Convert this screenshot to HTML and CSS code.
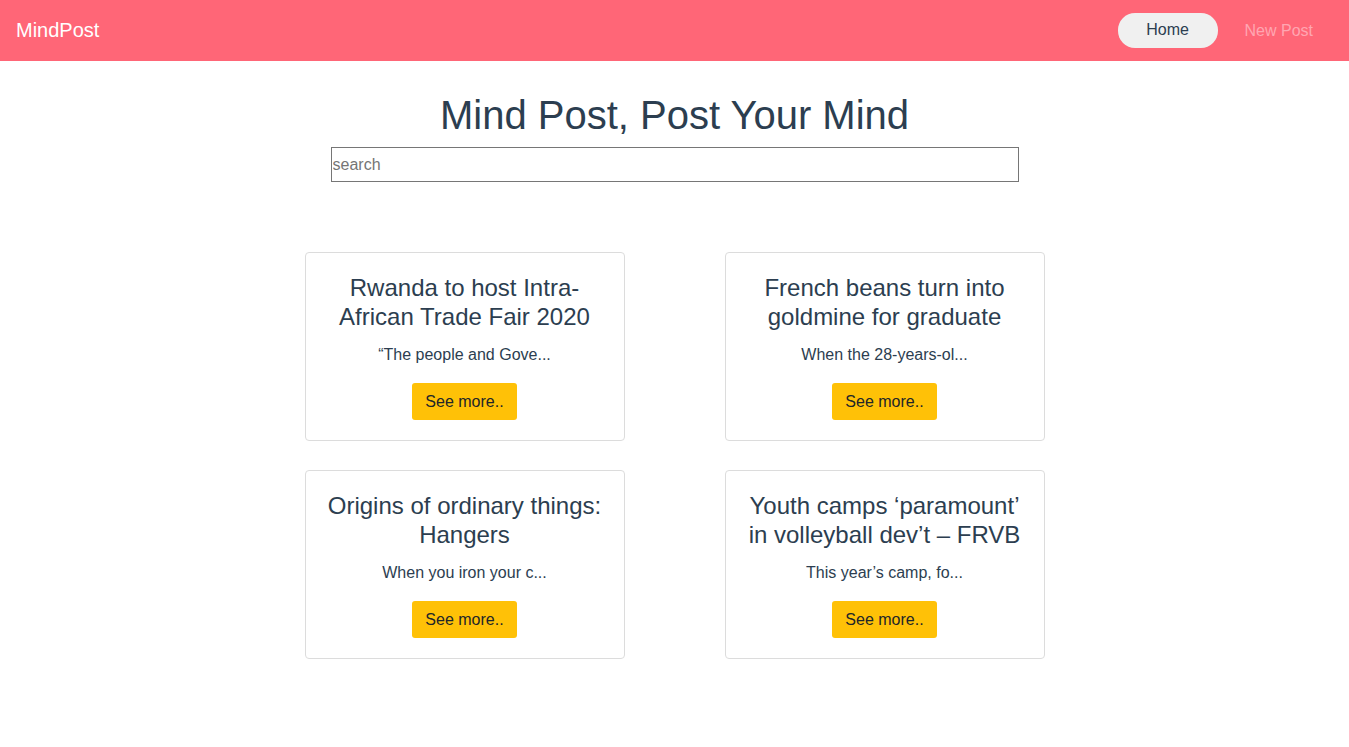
FILE: index.html
```html
<!DOCTYPE html>
<html>
<head>
<meta charset="utf-8">
<link rel="stylesheet" href="styles.css">
</head>
<body>
<nav class="navbar">
  <div class="brand">MindPost</div>
  <div class="nav-links">
    <a class="nav-link active" href="#">Home</a>
    <a class="nav-link" href="#">New Post</a>
  </div>
</nav>
<main class="main">
  <h1 class="title">Mind Post, Post Your Mind</h1>
  <input class="search" type="text" placeholder="search">
  <div class="grid">
    <div class="card">
      <h3 class="card-title">Rwanda to host Intra-African Trade Fair 2020</h3>
      <p class="card-text">“The people and Gove...</p>
      <button class="btn">See more..</button>
    </div>
    <div class="card">
      <h3 class="card-title">French beans turn into goldmine for graduate</h3>
      <p class="card-text">When the 28-years-ol...</p>
      <button class="btn">See more..</button>
    </div>
    <div class="card">
      <h3 class="card-title">Origins of ordinary things: Hangers</h3>
      <p class="card-text">When you iron your c...</p>
      <button class="btn">See more..</button>
    </div>
    <div class="card">
      <h3 class="card-title">Youth camps ‘paramount’ in volleyball dev’t – FRVB</h3>
      <p class="card-text">This year’s camp, fo...</p>
      <button class="btn">See more..</button>
    </div>
  </div>
</main>
</body>
</html>
```
FILE: styles.css
```css
* { box-sizing: border-box; }
body {
  margin: 0;
  font-family: "Liberation Sans", Arial, sans-serif;
  color: #2c3e50;
  background: #fff;
}
.navbar {
  height: 61px;
  background: #ff6677;
  display: flex;
  align-items: center;
  justify-content: space-between;
  padding: 0 36px 0 16px;
}
.brand {
  color: #fff;
  font-size: 20px;
}
.nav-links {
  display: flex;
  align-items: center;
  gap: 27px;
}
.nav-link {
  font-size: 16px;
  text-decoration: none;
  color: #ffa6b2;
}
.nav-link.active {
  background: #f0f0f0;
  color: #2c3e50;
  width: 100px;
  height: 35px;
  border-radius: 17px;
  display: flex;
  align-items: center;
  justify-content: center;
  margin-top: -1px;
}
.main {
  display: flex;
  flex-direction: column;
  align-items: center;
  padding-top: 31px;
}
.title {
  margin: 0;
  font-size: 40px;
  font-weight: normal;
  line-height: 46px;
}
.search {
  margin-top: 9px;
  width: 688px;
  height: 35px;
  border: 1px solid #767676;
  padding: 0 1px;
  font-family: "Liberation Sans", Arial, sans-serif;
  font-size: 16px;
  color: #2c3e50;
}
.search::placeholder { color: #757575; }
.grid {
  margin-top: 70px;
  display: grid;
  grid-template-columns: 320px 320px;
  column-gap: 100px;
  row-gap: 29px;
}
.card {
  border: 1px solid #dcdcdc;
  border-radius: 4px;
  padding: 20px 20px 20px;
  display: flex;
  flex-direction: column;
  align-items: center;
  text-align: center;
}
.card-title {
  margin: 0;
  font-size: 24px;
  font-weight: normal;
  line-height: 29px;
}
.card-text {
  margin: 15px 0 0;
  font-size: 16px;
  line-height: 18px;
}
.btn {
  margin-top: 19px;
  width: 105px;
  height: 37px;
  background: #ffc107;
  border: none;
  border-radius: 3px;
  font-family: "Liberation Sans", Arial, sans-serif;
  font-size: 16px;
  color: #212529;
  cursor: pointer;
}
```
